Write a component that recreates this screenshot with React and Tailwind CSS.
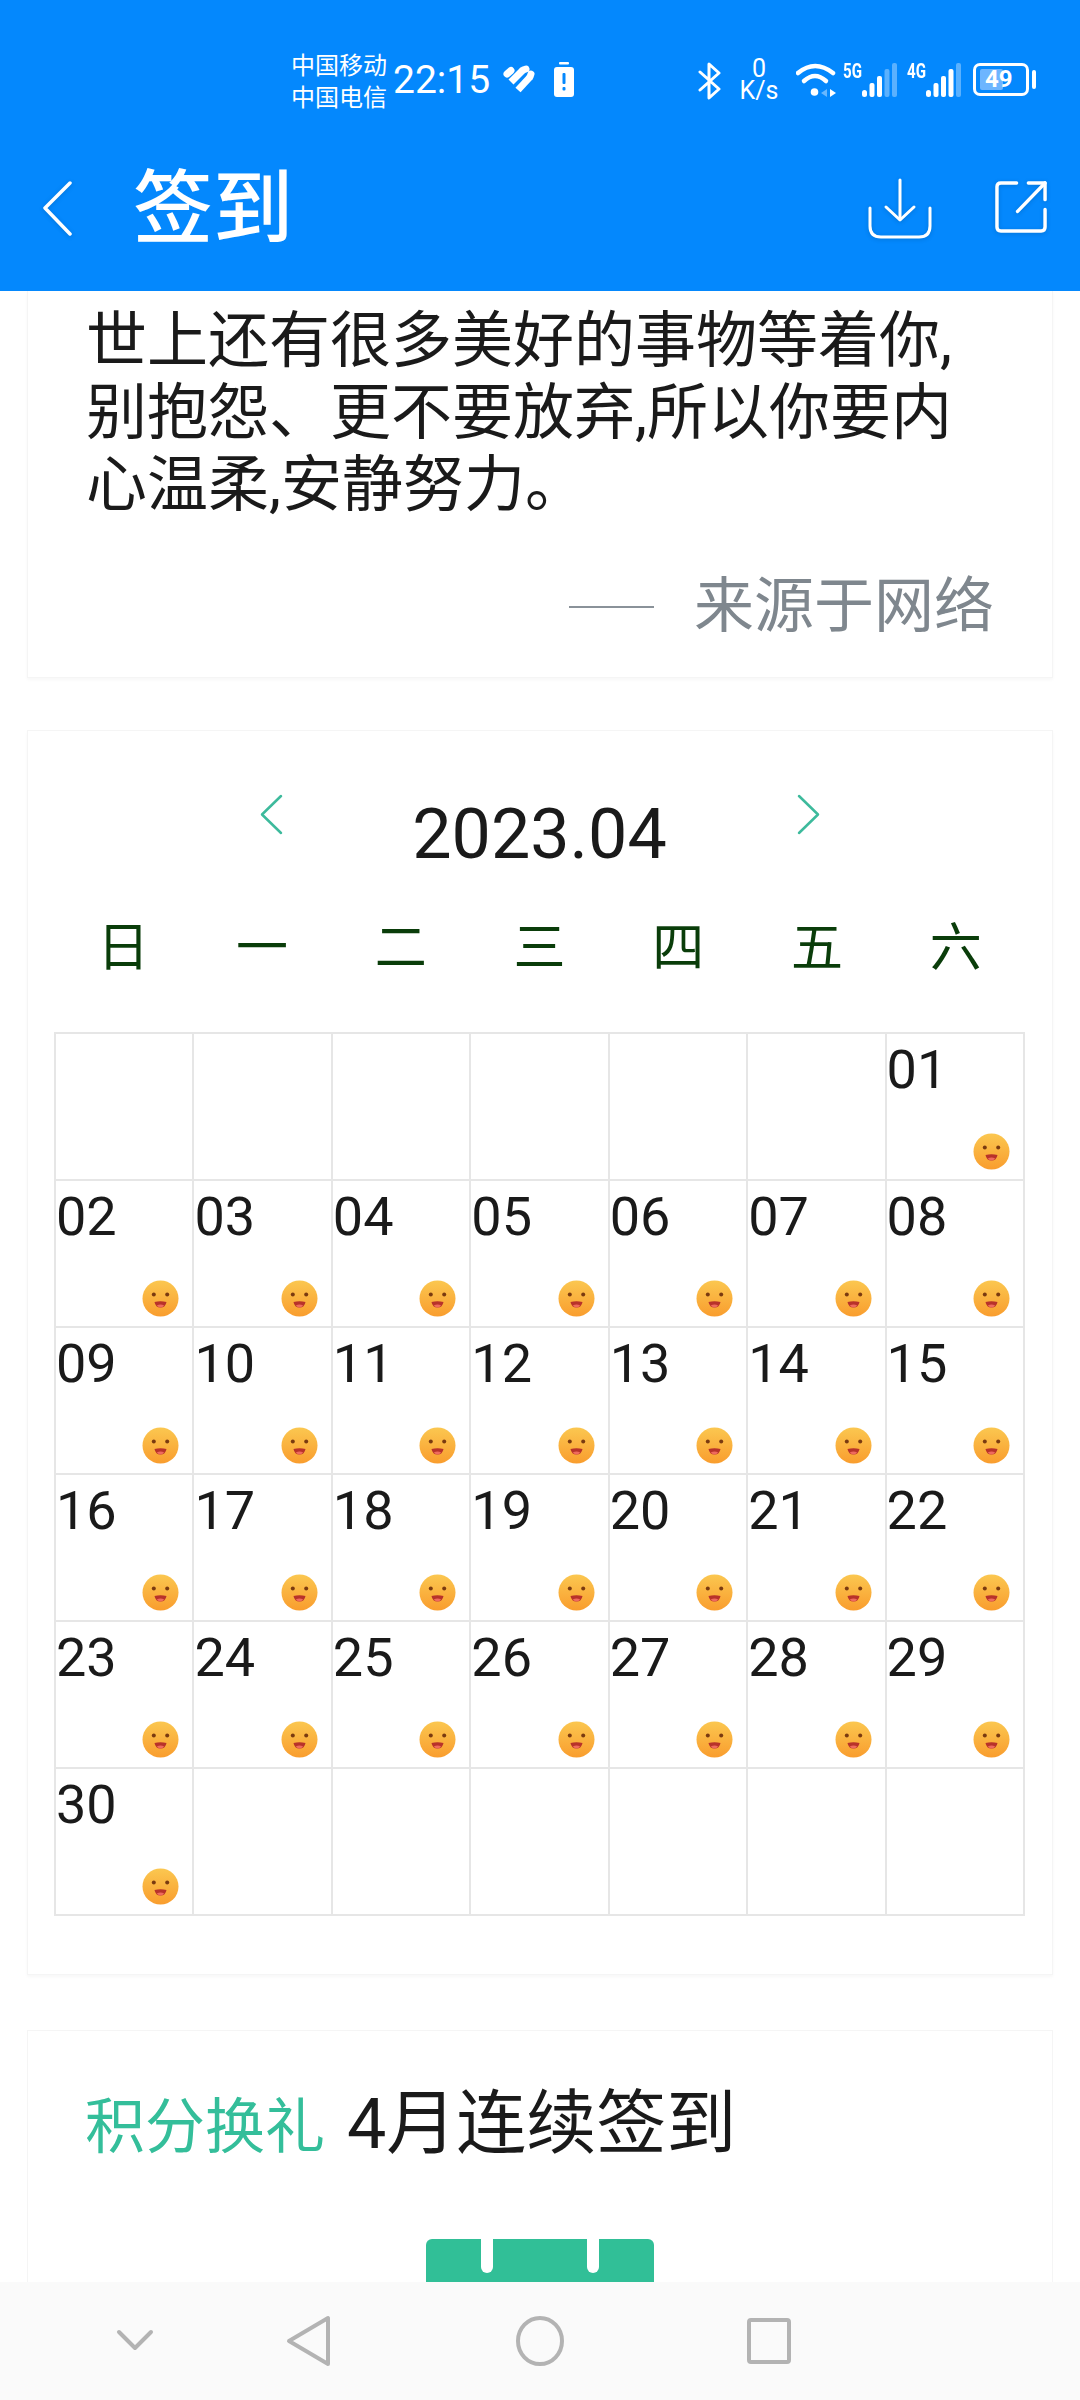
const FONT = 'Roboto, "Noto Sans CJK SC", sans-serif';

const weekdays = ["日", "一", "二", "三", "四", "五", "六"];

// April 2023 starts on a Saturday
const days = [...Array(6).fill(null), ...Array.from({ length: 30 }, (_, i) => String(i + 1).padStart(2, "0")), ...Array(6).fill(null)];

const Smiley = () => (
  <svg width="37" height="37" viewBox="0 0 37 37">
    <defs>
      <linearGradient id="face" x1="0" y1="0" x2="0" y2="1">
        <stop offset="0" stopColor="#fbc750" />
        <stop offset="1" stopColor="#f99d2e" />
      </linearGradient>
    </defs>
    <circle cx="18.5" cy="18.5" r="18" fill="url(#face)" />
    <circle cx="11.8" cy="14.5" r="2" fill="#7a3a10" />
    <circle cx="25.2" cy="14.5" r="2" fill="#7a3a10" />
    <path d="M12.5 22 Q18.5 20.5 24.5 22 Q23.5 27.5 18.5 27.5 Q13.5 27.5 12.5 22 Z" fill="#b8322a" />
    <path d="M14.8 25.5 Q18.5 23.5 22.2 25.5 Q20.5 27.5 18.5 27.5 Q16.5 27.5 14.8 25.5 Z" fill="#ef6a5e" />
  </svg>
);

const Signal = ({ faded }) => (
  <svg width="36" height="34" viewBox="0 0 36 34" fill="#fff">
    <rect x="0" y="27" width="5" height="7" rx="2.5" opacity={faded > 4 ? 0.35 : 1} />
    <rect x="7.5" y="20" width="5" height="14" rx="2" opacity={faded > 3 ? 0.35 : 1} />
    <rect x="15" y="13" width="5" height="21" rx="2" opacity={faded > 2 ? 0.35 : 1} />
    <rect x="22.5" y="6" width="5" height="28" rx="2" opacity={faded > 1 ? 0.35 : 1} />
    <rect x="30" y="0" width="5" height="34" rx="2" opacity={faded > 0 ? 0.35 : 1} />
  </svg>
);

const StatusBar = () => (
  <div className="flex items-start pt-[50px] pl-[291px] text-white">
    <div className="flex flex-col text-[24px] leading-[32px] w-[102px]">
      <span>中国移动</span>
      <span>中国电信</span>
    </div>
    <span className="text-[39px] leading-[40px] mt-[10px] w-[109px]">22:15</span>
    <svg className="mt-[15px]" width="34" height="28" viewBox="0 0 34 28" fill="none" stroke="#fff" strokeWidth="7" strokeLinecap="round">
      <path d="M5 9 L9 5.5" />
      <path d="M9 17 L21 5" strokeLinecap="butt" />
      <path d="M16 25 L28 12" strokeLinecap="butt" />
      <path d="M21 5 L24 4 M28 12 L29 9" />
    </svg>
    <svg className="mt-[12px] ml-[18px]" width="20" height="35" viewBox="0 0 20 35">
      <rect x="5" y="0" width="10" height="2.5" rx="1" fill="#fff" />
      <rect x="0" y="5" width="20" height="30" rx="3" fill="#fff" />
      <rect x="8.5" y="11" width="3" height="11" rx="1" fill="#0488fd" />
      <rect x="8.5" y="25" width="3" height="3.5" rx="1" fill="#0488fd" />
    </svg>
    <svg className="mt-[12px] ml-[124px]" width="24" height="38" viewBox="0 0 24 38" fill="none" stroke="#fff" strokeWidth="3" strokeLinejoin="round" strokeLinecap="round">
      <path d="M2 10 L21 27 L11 36 L11 2 L21 11 L2 28" />
    </svg>
    <div className="flex flex-col items-center ml-[18px] mt-[8px] w-[38px] text-[25px] leading-[22px]">
      <span>0</span>
      <span className="whitespace-nowrap">K/s</span>
    </div>
    <svg className="mt-[13px] ml-[18px]" width="42" height="34" viewBox="0 0 42 34" fill="none" stroke="#fff" strokeLinecap="round">
      <path d="M2 10 Q19 -4 37 10" strokeWidth="4.5" />
      <path d="M8 18 Q19 8 30 18" strokeWidth="4.5" />
      <circle cx="18.5" cy="29" r="3.8" fill="#fff" stroke="none" />
      <path d="M31 26 L25 30 L31 34 Z" fill="#fff" stroke="none" opacity="0.4" />
      <path d="M34 26 L40 30 L34 34 Z" fill="#fff" stroke="none" />
    </svg>
    <div className="relative mt-[13px] ml-[5px]">
      <span className="block origin-left scale-x-[0.72] text-[21px] leading-[17px] font-bold w-[53px]">5G</span>
      <div className="absolute left-[19px] top-0">
        <Signal faded={2} />
      </div>
    </div>
    <div className="relative mt-[13px] ml-[11px]">
      <span className="block origin-left scale-x-[0.72] text-[21px] leading-[17px] font-bold w-[55px]">4G</span>
      <div className="absolute left-[19px] top-0">
        <Signal faded={1} />
      </div>
    </div>
    <div className="flex items-center mt-[13px] ml-[11px]">
      <div className="relative w-[56px] h-[33px] border-[3px] border-white rounded-[7px]">
        <div className="absolute left-[4px] top-[3px] w-[23px] h-[21px] bg-[#6db5ff] rounded-[2px]" />
        <span className="absolute left-[9px] top-0 text-[24px] leading-[27px] font-bold">49</span>
      </div>
      <div className="w-[4px] h-[19px] bg-white rounded-full ml-[3px]" />
    </div>
  </div>
);

const TitleBar = () => (
  <div className="relative flex items-center h-[76px] mt-[57px] text-white">
    <svg className="ml-[41px] drop-shadow-sm" width="32" height="58" viewBox="0 0 32 58" fill="none" stroke="#fff" strokeWidth="3.5" strokeLinecap="round" strokeLinejoin="round">
      <path d="M29 3 L4 28 L29 54" />
    </svg>
    <h1 className="ml-[60px] text-[80px] leading-[76px] font-medium">签到</h1>
    <svg className="ml-auto mr-[-1px] drop-shadow-sm" width="66" height="62" viewBox="0 0 66 62" fill="none" stroke="#fff" strokeWidth="3" strokeLinecap="round" strokeLinejoin="round">
      <path d="M33 2 L33 41" />
      <path d="M19 29 L33 42 L47 29" />
      <path d="M3 30 L3 48 Q3 59 14 59 L52 59 Q63 59 63 48 L63 30" />
    </svg>
    <svg className="ml-[63px] mr-[32px] mb-[5px] drop-shadow-sm" width="53" height="53" viewBox="0 0 54 54" fill="none" stroke="#fff" strokeWidth="3.5" strokeLinecap="round" strokeLinejoin="round">
      <path d="M22 3 L6 3 Q2 3 2 7 L2 48 Q2 52 6 52 L47 52 Q51 52 51 48 L51 30" />
      <path d="M23 32 L51 3" />
      <path d="M34 3 L51 3 L51 20" />
    </svg>
  </div>
);

const QuoteCard = () => (
  <section className="mx-[27px] h-[387px] bg-white border-x border-b border-[#f5f5f5] shadow-[0_2px_3px_rgba(0,0,0,0.03)] px-[58px] pt-[14px] text-[61px]">
    <p className="leading-[72px] text-[#1a1a1a]">世上还有很多美好的事物等着你,别抱怨、更不要放弃,所以你要内心温柔,安静努力。</p>
    <div className="flex items-center justify-end mt-[50px] text-[60px] text-[#7f878e] leading-[72px]">
      <span className="w-[85px] h-[2px] bg-[#8a9299] mr-[40px]" />
      <span>来源于网络</span>
    </div>
  </section>
);

const CalendarCard = () => (
  <section className="mx-[27px] mt-[52px] h-[1245px] bg-white border border-[#f5f5f5] shadow-[0_2px_3px_rgba(0,0,0,0.03)] pl-[26px] pr-[27px]">
    <div className="flex justify-center pt-[62px]">
      <svg className="mt-[1px]" width="24" height="41" viewBox="0 0 24 41" fill="none" stroke="#3dba9c" strokeWidth="2.5" strokeLinecap="round" strokeLinejoin="round">
        <path d="M22 2 L3 20.5 L22 39" />
      </svg>
      <span className="mx-[128px] text-[70px] leading-[80px] mt-[1px] text-[#1a1a1a] w-[258px] text-center">2023.04</span>
      <svg className="mt-[1px]" width="24" height="41" viewBox="0 0 24 41" fill="none" stroke="#3dba9c" strokeWidth="2.5" strokeLinecap="round" strokeLinejoin="round">
        <path d="M2 2 L21 20.5 L2 39" />
      </svg>
    </div>
    <div className="grid grid-cols-7 mt-[45px] text-[52px] leading-[60px] text-center text-[#0a3d0a]">
      {weekdays.map((d) => (
        <span key={d}>{d}</span>
      ))}
    </div>
    <div className="grid grid-cols-7 mt-[53px] border-t-2 border-l-2 border-[#e6e6e6]">
      {days.map((d, i) => (
        <div key={i} className="relative h-[147px] border-r-2 border-b-2 border-[#e6e6e6]">
          {d && (
            <>
              <span className="block text-[54px] leading-[72px] text-[#1a1a1a]">{d}</span>
              <div className="absolute right-[13px] bottom-[9px] flex">
                <Smiley />
              </div>
            </>
          )}
        </div>
      ))}
    </div>
  </section>
);

const RewardCard = () => (
  <section className="mx-[27px] mt-[55px] h-[400px] bg-white border border-[#f5f5f5] px-[57px] pt-[53px]">
    <h2 className="flex items-baseline h-[80px] text-[60px] leading-[80px] font-normal">
      <span className="text-[#34be9a]">积分换礼</span>
      <span className="ml-[22px] text-[70px] text-[#1a1a1a]">4月连续签到</span>
    </h2>
    <div className="mt-[75px] ml-[341px] flex justify-center gap-[94px] w-[228px] h-[60px] bg-[#31bf97] rounded-t-[6px]">
      <span className="w-[12px] h-[34px] bg-white rounded-b-full" />
      <span className="w-[12px] h-[34px] bg-white rounded-b-full" />
    </div>
  </section>
);

const NavBar = () => (
  <nav className="relative z-10 h-[118px] bg-[#fafafa] shrink-0">
    <svg className="absolute left-[116px] top-[47px]" width="38" height="22" viewBox="0 0 38 22" fill="none" stroke="#b3b3b3" strokeWidth="4" strokeLinecap="round" strokeLinejoin="round">
      <path d="M3 3 L19 19 L35 3" />
    </svg>
    <svg className="absolute left-[286px] top-[33px]" width="46" height="52" viewBox="0 0 46 52" fill="none" stroke="#b3b3b3" strokeWidth="4" strokeLinejoin="round">
      <path d="M42 3 L42 49 L3 26 Z" />
    </svg>
    <svg className="absolute left-[516px] top-[34px]" width="48" height="50" viewBox="0 0 48 50" fill="none" stroke="#b3b3b3" strokeWidth="4">
      <ellipse cx="24" cy="25" rx="22" ry="23" />
    </svg>
    <svg className="absolute left-[747px] top-[36px]" width="44" height="46" viewBox="0 0 44 46" fill="none" stroke="#b3b3b3" strokeWidth="4" strokeLinejoin="round">
      <rect x="2" y="2" width="40" height="42" rx="2" />
    </svg>
  </nav>
);

const App = () => {
  return (
    <div className="w-[1080px] h-[2400px] flex flex-col overflow-hidden bg-white" style={{ fontFamily: FONT }}>
      <header className="h-[291px] shrink-0 bg-[#0488fd]">
        <StatusBar />
        <TitleBar />
      </header>
      <main className="flex-1 overflow-hidden min-h-0">
        <QuoteCard />
        <CalendarCard />
        <RewardCard />
      </main>
      <NavBar />
    </div>
  );
};

export default App;
